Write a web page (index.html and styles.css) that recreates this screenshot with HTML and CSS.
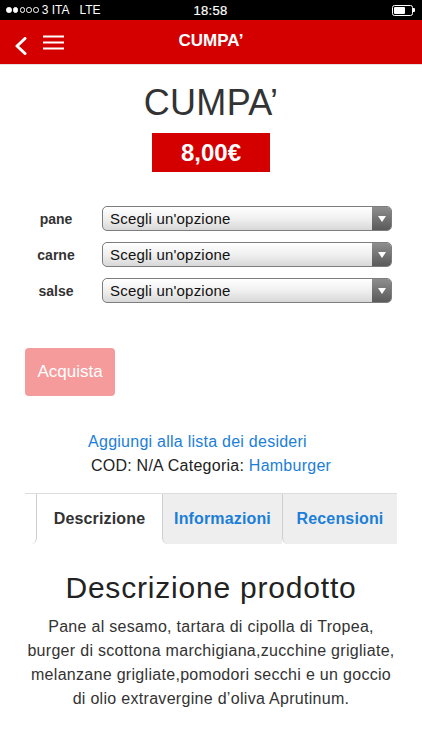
FILE: index.html
```html
<!DOCTYPE html>
<html lang="it">
<head>
<meta charset="utf-8">
<title>CUMPA'</title>
<link rel="stylesheet" href="styles.css">
</head>
<body>
<div class="statusbar">
  <div class="sb-left">
    <span class="dots"><i class="dot full"></i><i class="dot full"></i><i class="dot"></i><i class="dot"></i><i class="dot"></i></span>
    <span class="carrier">3 ITA</span>
    <span class="net">LTE</span>
  </div>
  <div class="sb-time">18:58</div>
  <div class="sb-right">
    <span class="battery"><span class="battery-fill"></span></span><span class="battery-nub"></span>
  </div>
</div>
<header class="navbar">
  <div class="nav-left">
    <svg class="icon-back" width="14" height="18" viewBox="0 0 14 18"><polyline points="11,1.5 3,9 11,16.5" fill="none" stroke="#fff" stroke-width="3" stroke-linecap="round" stroke-linejoin="round"/></svg>
    <svg class="icon-menu" width="21" height="15" viewBox="0 0 21 15"><path d="M0 1.5H21M0 7.5H21M0 13.5H21" stroke="#fff" stroke-width="2.2"/></svg>
  </div>
  <div class="nav-title">CUMPA’</div>
  <div class="nav-right"></div>
</header>
<main class="page">
  <h1 class="product-title">CUMPA’</h1>
  <div class="price">8,00€</div>
  <div class="variations">
    <label class="var-label">pane</label>
    <div class="select"><span class="select-text">Scegli un'opzione</span><span class="select-arrow"></span></div>
    <label class="var-label">carne</label>
    <div class="select"><span class="select-text">Scegli un'opzione</span><span class="select-arrow"></span></div>
    <label class="var-label">salse</label>
    <div class="select"><span class="select-text">Scegli un'opzione</span><span class="select-arrow"></span></div>
  </div>
  <button class="buy" type="button">Acquista</button>
  <div class="meta">
    <div class="wishlist"><a href="#">Aggiungi alla lista dei desideri</a></div>
    <div class="sku">COD: N/A Categoria: <a href="#">Hamburger</a></div>
  </div>
  <nav class="tabs">
    <span class="tab-stub"></span>
    <span class="tab active">Descrizione</span>
    <span class="tab tab-info">Informazioni</span>
    <span class="tab tab-rev">Recensioni</span>
  </nav>
  <section class="desc">
    <h2>Descrizione prodotto</h2>
    <p>Pane al sesamo, tartara di cipolla di Tropea, burger di scottona marchigiana,zucchine grigliate, melanzane grigliate,pomodori secchi e un goccio di olio extravergine d’oliva Aprutinum.</p>
  </section>
</main>
</body>
</html>
```

FILE: styles.css
```css
* { box-sizing: border-box; }
html, body { margin: 0; padding: 0; background: #fff; }
body { font-family: "Liberation Sans", Arial, sans-serif; color: #333; width: 422px; overflow: hidden; }

.statusbar {
  height: 20px;
  background: #000;
  color: #fff;
  display: grid;
  grid-template-columns: 1fr auto 1fr;
  align-items: center;
  font-size: 12px;
  padding: 0 7px 0 6px;
}
.sb-left { display: flex; align-items: center; }
.dots { display: flex; gap: 1.3px; margin-right: 3px; }
.dot { display: block; width: 5.5px; height: 5.5px; border-radius: 50%; border: 1px solid #fff; }
.dot.full { background: #fff; }
.carrier { margin-right: 10px; }
.sb-time { font-size: 13px; letter-spacing: 0.3px; -webkit-text-stroke: 0.2px #fff; }
.sb-right { display: flex; justify-content: flex-end; align-items: center; }
.battery { display: block; width: 21px; height: 11px; border: 1px solid #fff; border-radius: 2.5px; padding: 1px; }
.battery-fill { display: block; width: 11px; height: 100%; background: #fff; border-radius: 1px; }
.battery-nub { display: block; width: 2px; height: 4px; background: #fff; border-radius: 0 1px 1px 0; }

.navbar {
  height: 45px;
  background: #d40000;
  border-bottom: 1px solid #e6e0e0;
  display: grid;
  grid-template-columns: 1fr auto 1fr;
  align-items: center;
  color: #fff;
}
.nav-left { display: flex; align-items: center; padding-left: 14px; }
.icon-back { display: block; margin-top: 7px; }
.icon-menu { display: block; margin-left: 15px; margin-top: 1px; }
.nav-title { font-size: 17px; font-weight: bold; margin-top: -2px; }

.page { padding: 0 25px; }

.product-title {
  margin: 16px 0 0;
  font-size: 36px;
  line-height: 44px;
  font-weight: normal;
  text-align: center;
  color: #333;
  letter-spacing: 0.3px;
}
.price {
  width: 118px;
  height: 39px;
  margin: 8px auto 0;
  background: #d40000;
  color: #fff;
  font-size: 24px;
  font-weight: bold;
  line-height: 39px;
  text-align: center;
}

.variations {
  display: grid;
  grid-template-columns: 62px 290px;
  column-gap: 15px;
  row-gap: 11px;
  align-items: center;
  margin-top: 34px;
}
.var-label { font-size: 14px; font-weight: bold; text-align: center; color: #333; }
.select {
  height: 25px;
  border: 1px solid #7d7d7d;
  border-radius: 5px;
  background: linear-gradient(#ffffff, #f0f0f0 50%, #d8d8d8);
  display: flex;
  align-items: center;
  overflow: hidden;
}
.select-text { flex: 1; padding-left: 7px; font-size: 15px; color: #111; letter-spacing: 0.2px; }
.select-arrow {
  width: 19px;
  align-self: stretch;
  background: linear-gradient(#8e8e8e, #5a5a5a);
  display: flex;
  align-items: center;
  justify-content: center;
}
.select-arrow::after {
  content: "";
  width: 0; height: 0;
  border-left: 4px solid transparent;
  border-right: 4px solid transparent;
  border-top: 6px solid #fff;
}

.buy {
  display: block;
  margin-top: 45px;
  width: 90px;
  height: 48px;
  border: 0;
  border-radius: 4px;
  background: #f59b9b;
  color: #fff;
  font-family: inherit;
  font-size: 17px;
  padding: 0;
}

.meta { margin-top: 34px; text-align: center; font-size: 16px; line-height: 24px; letter-spacing: 0.25px; }
.meta a { color: #1b7ed8; text-decoration: none; }
.wishlist { padding-right: 27px; }
.sku { color: #222; }

.tabs {
  margin-top: 15px;
  height: 51px;
  display: flex;
  border-top: 1px solid #dddddd;
}
.tab-stub {
  width: 12px;
  border-right: 1px solid #cfcfcf;
  border-bottom-right-radius: 6px;
}
.tab {
  display: flex;
  align-items: center;
  justify-content: center;
  font-size: 16px;
  font-weight: bold;
  letter-spacing: 0.15px;
}
.tab.active { width: 125px; color: #333; background: #fff; }
.tab-info, .tab-rev {
  background: #eeeeee;
  color: #1b7ed8;
  border-left: 1px solid #cfcfcf;
  border-bottom-left-radius: 6px;
}
.tab-info { width: 120px; }
.tab-rev { width: 115px; }

.desc { text-align: center; }
.desc h2 {
  margin: 26px 0 0;
  font-size: 30px;
  line-height: 36px;
  font-weight: normal;
  color: #222;
  letter-spacing: 0.8px;
}
.desc p {
  margin: 9px 0 0;
  font-size: 16px;
  line-height: 24px;
  color: #333;
  letter-spacing: 0.3px;
}
```
